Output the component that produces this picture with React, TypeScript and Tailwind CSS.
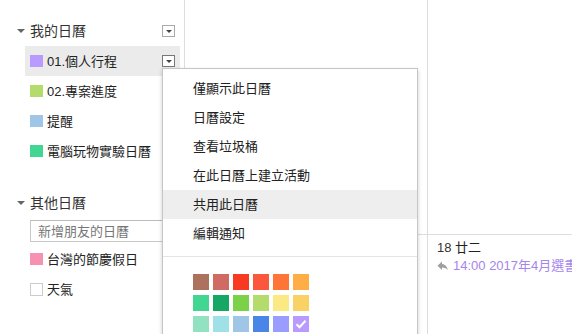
import React from "react";

const font = "font-['Arial','Liberation_Sans','Noto_Sans_CJK_TC',sans-serif]";

const myCalendars = [
  { name: "01.個人行程", color: "bg-[#b99aff]", active: true },
  { name: "02.專案進度", color: "bg-[#b3dc6c]", active: false },
  { name: "提醒", color: "bg-[#9fc6e7]", active: false },
  { name: "電腦玩物實驗日曆", color: "bg-[#42d692]", active: false },
];

const menuItems = [
  "僅顯示此日曆",
  "日曆設定",
  "查看垃圾桶",
  "在此日曆上建立活動",
  "共用此日曆",
  "編輯通知",
];

const swatches = [
  "bg-[#ac725e]", "bg-[#d06b64]", "bg-[#f83a22]", "bg-[#fa573c]", "bg-[#ff7537]", "bg-[#ffad46]",
  "bg-[#42d692]", "bg-[#16a765]", "bg-[#7bd148]", "bg-[#b3dc6c]", "bg-[#fbe983]", "bg-[#fad165]",
  "bg-[#92e1c0]", "bg-[#9fe1e7]", "bg-[#9fc6e7]", "bg-[#4986e7]", "bg-[#9a9cff]", "bg-[#b99aff]",
];

const Caret = () => (
  <span className="w-0 h-0 border-l-[4px] border-r-[4px] border-t-[4px] border-l-transparent border-r-transparent border-t-[#666]" />
);

const DropButton = ({ dark }: { dark?: boolean }) => (
  <span
    className={`w-[13px] h-[12px] flex items-center justify-center bg-white border ${
      dark ? "border-[#777]" : "border-[#aaa]"
    }`}
  >
    <span className="w-0 h-0 border-l-[3px] border-r-[3px] border-t-[3px] border-l-transparent border-r-transparent border-t-[#444]" />
  </span>
);

const SectionHeader = ({ title, button }: { title: string; button?: boolean }) => (
  <div className="h-[30px] flex items-center pl-[17px] pr-[9px]">
    <Caret />
    <span className="ml-[5px] text-[14px] leading-[16px] text-[#333]">{title}</span>
    <span className="flex-1" />
    {button && <DropButton />}
  </div>
);

const App = () => {
  return (
    <div className={`w-[572px] h-[334px] relative overflow-hidden bg-white flex ${font}`}>
      {/* Sidebar */}
      <aside className="w-[185px] shrink-0 border-r border-[#ddd] pt-[16px]">
        <SectionHeader title="我的日曆" button />
        {myCalendars.map((c) => (
          <div
            key={c.name}
            className={`ml-[25px] w-[155px] h-[30px] flex items-center pl-[5px] pr-[5px] ${
              c.active ? "bg-[#ebebeb]" : ""
            }`}
          >
            <span className={`w-[13px] h-[12px] ${c.color}`} />
            <span className="ml-[4px] text-[13px] leading-[15px] text-[#222]">{c.name}</span>
            <span className="flex-1" />
            {c.active && <DropButton dark />}
          </div>
        ))}

        <div className="mt-[22px]">
          <SectionHeader title="其他日曆" />
        </div>
        <div className="mt-[2px] ml-[30px] w-[150px] h-[22px] border border-[#c8c8c8] border-t-[#bbb] flex items-center pl-[7px]">
          <span className="text-[13px] leading-[15px] text-[#777]">新增朋友的日曆</span>
        </div>
        <div className="mt-[2px] h-[30px] flex items-center pl-[30px]">
          <span className="w-[13px] h-[12px] bg-[#f691b2]" />
          <span className="ml-[4px] text-[13px] leading-[15px] text-[#222]">台灣的節慶假日</span>
        </div>
        <div className="h-[30px] flex items-center pl-[30px]">
          <span className="w-[13px] h-[13px] bg-white border border-[#ccc]" />
          <span className="ml-[4px] text-[13px] leading-[15px] text-[#222]">天氣</span>
        </div>
      </aside>

      {/* Calendar grid */}
      <main className="flex-1 flex flex-col">
        <div className="h-[235px] flex border-b border-[#ddd]">
          <div className="w-[242px]" />
          <div className="flex-1 border-l border-[#ddd]" />
        </div>
        <div className="flex-1 flex">
          <div className="w-[242px]" />
          <div className="flex-1 border-l border-[#ddd] pl-[9px] pt-[5px] whitespace-nowrap overflow-hidden">
            <div className="text-[13px] leading-[15px] text-[#222]">
              <span className="text-[#333]">18</span> 廿二
            </div>
            <div className="mt-[3px] flex items-center text-[13px] leading-[15px] text-[#a585ec]">
              <svg width="12" height="10" viewBox="0 0 24 20" className="mr-[4px] shrink-0">
                <path d="M10 6V1L1 9.5 10 18v-5.1c5.5 0 9.3 1.6 12 5.6-1.2-5.8-4.6-11.4-12-12.5z" fill="#9e9e9e" />
              </svg>
              <span>14:00 2017年4月選書會</span>
            </div>
          </div>
        </div>
      </main>

      {/* Dropdown menu */}
      <div className="absolute left-[162px] top-[68px] w-[256px] h-[290px] bg-white border border-[#c6c6c6] shadow-[0_2px_4px_rgba(0,0,0,0.2)] pt-[5px]">
        {menuItems.map((item, i) => (
          <div
            key={item}
            className={`h-[29px] flex items-center pl-[30px] text-[13px] leading-[15px] text-[#222] ${
              i === 4 ? "bg-[#eeeeee]" : ""
            }`}
          >
            {item}
          </div>
        ))}
        <div className="mt-[8px] h-px bg-[#e5e5e5]" />
        <div className="mt-[17px] pl-[30px] grid grid-cols-[repeat(6,16px)] gap-x-[4px] gap-y-[5px]">
          {swatches.map((s, i) => (
            <div key={i} className={`w-[16px] h-[16px] ${s} flex items-center justify-center`}>
              {i === swatches.length - 1 && (
                <svg width="12" height="10" viewBox="0 0 12 10">
                  <path d="M1.5 5.2l3 3 6-6.4" stroke="#fff" strokeWidth="2" fill="none" />
                </svg>
              )}
            </div>
          ))}
        </div>
      </div>
    </div>
  );
};

export default App;
